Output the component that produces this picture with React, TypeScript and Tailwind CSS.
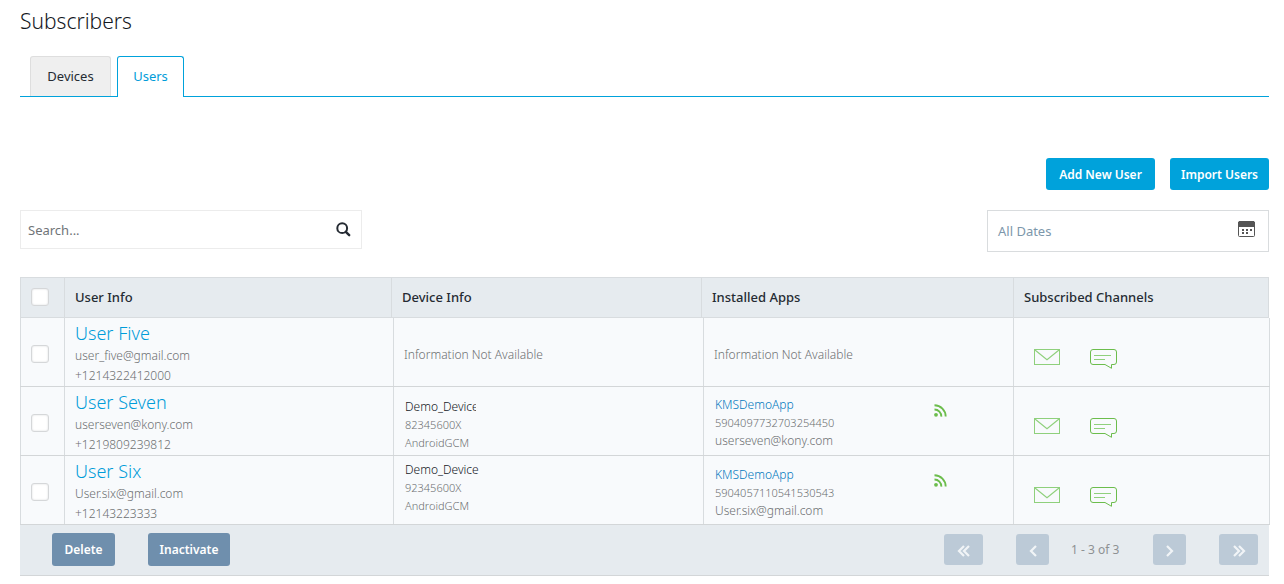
import type { ReactNode } from "react";

type Device = { name: string; id: string; platform: string; clipped?: boolean; pad: string };
type InstalledApp = { name: string; id: string; account: string; pad: string };
type User = { name: string; email: string; phone: string; device?: Device; app?: InstalledApp };

const users: User[] = [
  { name: "User Five", email: "user_five@gmail.com", phone: "+1214322412000" },
  {
    name: "User Seven",
    email: "userseven@kony.com",
    phone: "+1219809239812",
    device: { name: "Demo_Device", id: "82345600X", platform: "AndroidGCM", clipped: true, pad: "pt-[11px]" },
    app: { name: "KMSDemoApp", id: "5904097732703254450", account: "userseven@kony.com", pad: "pt-[9px]" },
  },
  {
    name: "User Six",
    email: "User.six@gmail.com",
    phone: "+12143223333",
    device: { name: "Demo_Device", id: "92345600X", platform: "AndroidGCM", pad: "pt-[5px]" },
    app: { name: "KMSDemoApp", id: "5904057110541530543", account: "User.six@gmail.com", pad: "pt-[10px]" },
  },
];

const headCols =
  "grid grid-cols-[44px_minmax(0,327fr)_minmax(0,310fr)_minmax(0,312fr)_minmax(0,256fr)]";
const bodyCols =
  "grid grid-cols-[44px_minmax(0,329fr)_minmax(0,310fr)_minmax(0,310fr)_minmax(0,257fr)]";

function SearchIcon() {
  return (
    <svg width="15" height="15" viewBox="0 0 15 15" fill="none" stroke="#252b33" aria-hidden="true">
      <circle cx="6.2" cy="6.2" r="4.9" strokeWidth="2" />
      <path d="M9.8 9.8 13.2 13.2" strokeWidth="2.4" strokeLinecap="round" />
    </svg>
  );
}

function CalendarIcon() {
  return (
    <svg width="17" height="16" viewBox="0 0 17 16" aria-hidden="true">
      <rect x="0.5" y="0.5" width="16" height="15" rx="1" fill="#fff" stroke="#555" />
      <path d="M0 1h1V0h15v1h1v5H0z" fill="#555" />
      <path d="M4 8h2v2H4zM8 8h2v2H8zM12 8h2v2h-2zM4 11h2v2H4zM8 11h2v2H8z" fill="#555" />
    </svg>
  );
}

function MailIcon() {
  return (
    <svg width="26" height="16" viewBox="0 0 26 16" fill="none" stroke="#8fd07c" aria-hidden="true">
      <rect x="0.5" y="0.5" width="25" height="15" />
      <path d="M1 1 13 10.8 25 1" strokeWidth="1.1" />
    </svg>
  );
}

function MessageIcon() {
  return (
    <svg width="27" height="20" viewBox="0 0 27 20" fill="none" stroke="#6cbd4c" aria-hidden="true">
      <path d="M3 .5H24A2.5 2.5 0 0 1 26.5 3V13A2.5 2.5 0 0 1 24 15.5H21.5V19.3L15 15.5H3A2.5 2.5 0 0 1 .5 13V3A2.5 2.5 0 0 1 3 .5Z" />
      <path d="M4 6.5H21M4 10.5H15" stroke="#8fd07c" />
    </svg>
  );
}

function FeedIcon() {
  return (
    <svg width="13" height="13" viewBox="0 0 13 13" fill="none" stroke="#6cbd4c" aria-hidden="true">
      <circle cx="2" cy="10.8" r="1.9" fill="#6cbd4c" stroke="none" />
      <path d="M.5 5.5A6.8 6.8 0 0 1 7.3 12.6" strokeWidth="1.9" />
      <path d="M.5 1.3A11.3 11.3 0 0 1 11.7 12.6" strokeWidth="1.9" />
    </svg>
  );
}

function Chevrons({ d }: { d: string }) {
  return (
    <svg
      width="14"
      height="14"
      viewBox="0 0 14 14"
      fill="none"
      stroke="#f1f4f7"
      strokeWidth="2.2"
      className="mt-[3px]"
      aria-hidden="true"
    >
      <path d={d} />
    </svg>
  );
}

function Tick({ label }: { label: string }) {
  return (
    <input
      type="checkbox"
      aria-label={label}
      className="block size-[18px] appearance-none rounded-[3px] border border-[#d5d7d9] bg-white shadow-[inset_0_0_2px_#d5d7d9]"
    />
  );
}

function PageButton({ label, wide, d }: { label: string; wide?: boolean; d: string }) {
  return (
    <button
      type="button"
      aria-label={label}
      className={`flex h-[31px] items-center justify-center rounded-[3px] bg-[#bccad7] ${wide ? "w-[39px]" : "w-[33px]"}`}
    >
      <Chevrons d={d} />
    </button>
  );
}

function HeadCell({ children }: { children: ReactNode }) {
  return (
    <th className="flex items-center border-l border-[#d8dcdf] pb-px pl-[10px] text-[13px] leading-5 font-medium last:border-r">
      {children}
    </th>
  );
}

function Unavailable() {
  return <span className="mt-[27px] block text-xs leading-5">Information Not Available</span>;
}

function UserRow({ user }: { user: User }) {
  const { device, app } = user;
  return (
    <tr className={`${bodyCols} h-[69px] border-b border-[#d3d6d8]`}>
      <td className="flex items-center border-l border-[#d8dcdf] pt-1 pl-[10px]">
        <Tick label={`Select ${user.name}`} />
      </td>
      <td className="border-l border-[#d8dcdf] pl-[10px] text-xs">
        <a href="#user" className="mt-[3px] mb-px block text-lg leading-6 text-[#009cd9]">
          {user.name}
        </a>
        <span className="block leading-5">{user.email}</span>
        <span className="block leading-5">{user.phone}</span>
      </td>
      <td className="border-l border-[#d8dcdf] pl-[10px]">
        {device ? (
          <div className={`${device.pad} pl-px text-[11px] leading-[18px]`}>
            <span
              className={`block overflow-hidden text-xs leading-[18px] whitespace-nowrap text-[#14181e] ${device.clipped ? "w-[71px]" : ""}`}
            >
              {device.name}
            </span>
            <span className="block">{device.id}</span>
            <span className="block">{device.platform}</span>
          </div>
        ) : (
          <Unavailable />
        )}
      </td>
      <td className="border-l border-[#d8dcdf] pl-[10px]">
        {app ? (
          <div className={`${app.pad} flex justify-between pr-[66px] pl-px text-[11px] leading-[18px]`}>
            <div>
              <a href="#app" className="block text-xs leading-[18px] text-[#0078bd]">
                {app.name}
              </a>
              <span className="block">{app.id}</span>
              <span className="block text-xs leading-[18px]">{app.account}</span>
            </div>
            <span className="pt-2">
              <FeedIcon />
            </span>
          </div>
        ) : (
          <Unavailable />
        )}
      </td>
      <td className="flex items-start gap-[30px] border-x border-[#d8dcdf] pt-[31px] pl-5">
        <MailIcon />
        <MessageIcon />
      </td>
    </tr>
  );
}

export default function App() {
  return (
    <main className="bg-white pr-[15px] pb-2 pl-5 font-['Noto_Sans',sans-serif] font-light text-[#252b33]">
      <h1 className="pt-[7px] text-[21px] leading-7 font-light text-[#14181e]">Subscribers</h1>

      <nav className="mt-[21px] flex h-[41px] gap-[6px] border-b border-[#00a2db] pl-[10px] text-[13px] font-normal">
        <a
          href="#devices"
          className="flex w-[81px] items-center justify-center rounded-t-[3px] border border-b-0 border-[#dedede] bg-[#efefef]"
        >
          Devices
        </a>
        <a
          href="#users"
          className="-mb-px flex w-[67px] items-center justify-center rounded-t-[3px] border border-b-0 border-[#00a2db] bg-white text-[#009cd9]"
        >
          Users
        </a>
      </nav>

      <div className="mt-[61px] flex justify-end gap-[15px] text-xs font-semibold text-white">
        <button type="button" className="h-8 w-[109px] rounded-[3px] bg-[#00a2db] pt-[2px]">
          Add New User
        </button>
        <button type="button" className="h-8 w-[99px] rounded-[3px] bg-[#00a2db] pt-[2px]">
          Import Users
        </button>
      </div>

      <div className="mt-5 flex items-start justify-between text-[13px] font-normal">
        <label className="flex h-[39px] w-[342px] items-center border border-[#ececec] pr-[10px] pl-[7px]">
          <input
            type="text"
            aria-label="Search"
            placeholder="Search..."
            className="min-w-0 flex-1 pt-[2px] outline-none placeholder:text-[#707478]"
          />
          <SearchIcon />
        </label>
        <button
          type="button"
          className="flex h-[42px] w-[282px] items-center justify-between border border-[#d9dcde] pr-[13px] pl-[10px] text-[#7d97ab]"
        >
          <span className="pt-px">All Dates</span>
          <span className="pb-1">
            <CalendarIcon />
          </span>
        </button>
      </div>

      <table className="mt-[25px] block text-left text-[#6c6f71]">
        <thead className="block bg-[#e6ebef] text-[#252b33]">
          <tr className={`${headCols} h-[41px] border-y border-[#d8dcdf]`}>
            <th className="flex items-center border-l border-[#d8dcdf] pb-px pl-[10px]">
              <Tick label="Select all users" />
            </th>
            <HeadCell>User Info</HeadCell>
            <HeadCell>Device Info</HeadCell>
            <HeadCell>Installed Apps</HeadCell>
            <HeadCell>Subscribed Channels</HeadCell>
          </tr>
        </thead>
        <tbody className="-mr-px block bg-[#f8fafc]">
          {users.map((user) => (
            <UserRow key={user.name} user={user} />
          ))}
        </tbody>
      </table>

      <footer className="flex h-[51px] items-center justify-between border-b border-[#d3d6d8] bg-[#e6ebef] pr-[11px] pb-px pl-8">
        <div className="flex gap-[33px] text-xs font-semibold text-white">
          <button type="button" className="h-[33px] w-[63px] rounded-[3px] bg-[#6f8fad] pt-px">
            Delete
          </button>
          <button type="button" className="h-[33px] w-[82px] rounded-[3px] bg-[#6f8fad] pt-px">
            Inactivate
          </button>
        </div>
        <div className="flex items-center gap-[33px] text-xs font-normal text-[#8e9193]">
          <PageButton label="First page" wide d="M7 2 2 7l5 5M12 2 7 7l5 5" />
          <div className="flex items-center">
            <PageButton label="Previous page" d="M10 2 5 7l5 5" />
            <span className="w-[104px] pt-px pl-[22px]">1 - 3 of 3</span>
            <PageButton label="Next page" d="M4 2l5 5-5 5" />
          </div>
          <PageButton label="Last page" wide d="M2 2l5 5-5 5M7 2l5 5-5 5" />
        </div>
      </footer>
    </main>
  );
}
